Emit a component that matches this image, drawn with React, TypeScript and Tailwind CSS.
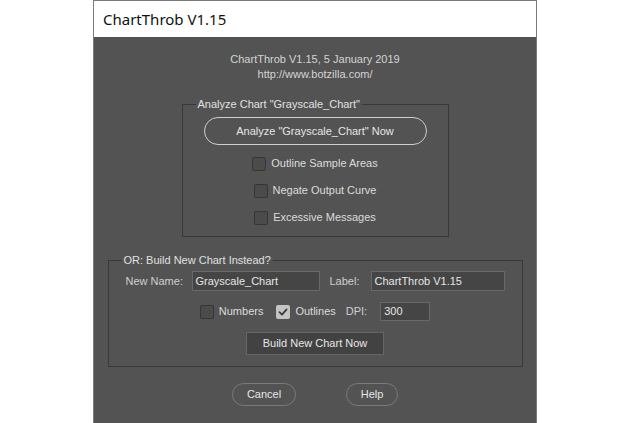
import React from "react";

const ui = { fontFamily: '"Liberation Sans", Arial, sans-serif' };

function Check({ checked = false, label }: { checked?: boolean; label: string }) {
  return (
    <label className="flex items-center gap-[5px] text-[11px] text-[#dcdcdc]">
      <span
        className={
          checked
            ? "flex h-[14px] w-[14px] items-center justify-center rounded-[2px] bg-[#c4c4c4]"
            : "h-[14px] w-[14px] rounded-[2px] border border-[#363636] bg-[#4b4b4b]"
        }
      >
        {checked && (
          <svg width="10" height="10" viewBox="0 0 10 10" fill="none">
            <polyline
              points="1.5,5.2 4,7.6 8.6,2.4"
              stroke="#3c3c3c"
              strokeWidth="1.8"
              strokeLinecap="round"
              strokeLinejoin="round"
            />
          </svg>
        )}
      </span>
      <span>{label}</span>
    </label>
  );
}

export default function App() {
  return (
    <div className="min-h-screen bg-white" style={ui}>
      <div className="mx-auto w-[444px] border-x border-t border-[#7a7a7a]">
        <div
          className="flex h-[36px] items-center bg-white pl-[9px] text-[15px] text-[#111]"
          style={{ fontFamily: '"Noto Sans", "Open Sans", sans-serif' }}
        >
          ChartThrob V1.15
        </div>

        <div className="h-[386px] bg-[#535353] pt-[15px] text-[#dcdcdc]">
          <div className="text-center text-[11px] leading-[15px] text-[#d4d4d4]">
            <div>ChartThrob V1.15, 5 January 2019</div>
            <div>http://www.botzilla.com/</div>
          </div>

          <fieldset className="mx-auto mt-[15px] w-[267px] border border-[#383838] px-0 pb-[5px]">
            <legend className="ml-[13px] px-[2px] text-[11px] leading-[14px] text-[#e0e0e0]">
              Analyze Chart "Grayscale_Chart"
            </legend>
            <div className="mt-[6px] flex justify-center">
              <button className="h-[28px] w-[223px] rounded-full border-[1.5px] border-[#cfcfcf] text-[11px] text-[#e6e6e6]">
                Analyze "Grayscale_Chart" Now
              </button>
            </div>
            <div className="mt-[5px] flex flex-col">
              <div className="flex h-[27px] items-center justify-center">
                <Check label="Outline Sample Areas" />
              </div>
              <div className="flex h-[27px] items-center justify-center">
                <Check label="Negate Output Curve" />
              </div>
              <div className="flex h-[27px] items-center justify-center">
                <Check label="Excessive Messages" />
              </div>
            </div>
          </fieldset>

          <fieldset className="mx-auto mt-[16px] w-[415px] border border-[#383838] px-0 pb-[11px]">
            <legend className="ml-[13px] px-[2px] text-[11px] leading-[14px] text-[#e0e0e0]">
              OR: Build New Chart Instead?
            </legend>
            <div className="mt-[4px] flex h-[20px] items-center pl-[17px] text-[11px]">
              <span className="w-[66px] text-[#cfcfcf]">New Name:</span>
              <div className="flex h-[20px] w-[128px] items-center border border-[#686868] bg-[#454545] px-[3px] text-[#e6e6e6]">
                Grayscale_Chart
              </div>
              <span className="ml-[10px] w-[41px] text-[#cfcfcf]">Label:</span>
              <div className="flex h-[20px] w-[134px] items-center border border-[#686868] bg-[#454545] px-[3px] text-[#e6e6e6]">
                ChartThrob V1.15
              </div>
            </div>

            <div className="mt-[11px] flex h-[19px] items-center justify-center text-[11px]">
              <Check label="Numbers" />
              <div className="ml-[13px]">
                <Check checked label="Outlines" />
              </div>
              <span className="ml-[10px] text-[#cfcfcf]">DPI:</span>
              <div className="ml-[13px] flex h-[19px] w-[50px] items-center border border-[#686868] bg-[#454545] px-[3px] text-[#e6e6e6]">
                300
              </div>
            </div>

            <div className="mt-[11px] flex justify-center">
              <button className="h-[23px] w-[138px] border border-[#666666] bg-[#424242] text-[11px] text-[#e6e6e6]">
                Build New Chart Now
              </button>
            </div>
          </fieldset>

          <div className="mt-[16px] flex justify-center gap-[50px]">
            <button className="h-[23px] w-[64px] rounded-full border border-[#7a7a7a] text-[11px] text-[#e6e6e6]">
              Cancel
            </button>
            <button className="h-[23px] w-[52px] rounded-full border border-[#7a7a7a] text-[11px] text-[#e6e6e6]">
              Help
            </button>
          </div>
        </div>
      </div>
    </div>
  );
}
